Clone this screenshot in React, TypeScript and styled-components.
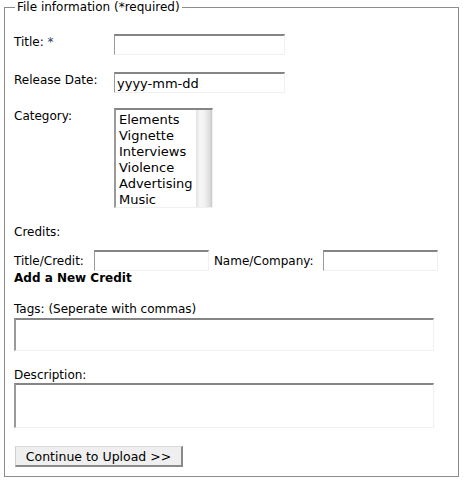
import React from "react";
import styled, { createGlobalStyle } from "styled-components";

const GlobalStyle = createGlobalStyle`
  body {
    margin: 0;
    background: #ffffff;
    font-family: "DejaVu Sans", Verdana, sans-serif;
    font-size: 12px;
    color: #000;
  }
`;

const categories = [
  "Elements",
  "Vignette",
  "Interviews",
  "Violence",
  "Advertising",
  "Music",
];

export default function App() {
  return (
    <>
      <GlobalStyle />
      <Fieldset>
        <Legend>File information (*required)</Legend>

        <FieldRow $gap={17}>
          <Label>
            Title: <Required>*</Required>
          </Label>
          <TextInput type="text" $width={171} />
        </FieldRow>

        <FieldRow $gap={15}>
          <Label>Release Date:</Label>
          <TextInput type="text" $width={171} defaultValue="yyyy-mm-dd" />
        </FieldRow>

        <FieldRow $gap={17}>
          <Label>Category:</Label>
          <ListBox role="listbox">
            <Options>
              {categories.map((c) => (
                <Option key={c}>{c}</Option>
              ))}
            </Options>
            <Track />
          </ListBox>
        </FieldRow>

        <Line $gap={11}>Credits:</Line>

        <CreditRow>
          <CreditLabel $space={10}>Title/Credit:</CreditLabel>
          <TextInput type="text" $width={115} />
          <CreditLabel $space={9} $lead={5}>
            Name/Company:
          </CreditLabel>
          <TextInput type="text" $width={115} />
        </CreditRow>

        <AddLink $gap={17}>Add a New Credit</AddLink>

        <Line $gap={2}>Tags: (Seperate with commas)</Line>
        <TextArea $height={33} $gap={17} />

        <Line $gap={1}>Description:</Line>
        <TextArea $height={45} $gap={18} />

        <SubmitButton type="button">Continue to Upload &gt;&gt;</SubmitButton>
      </Fieldset>
    </>
  );
}

const Fieldset = styled.fieldset`
  box-sizing: border-box;
  width: 455px;
  margin: 0 0 0 4px;
  padding: 20px 9px 9px 9px;
  border: 1px solid #8c8c8c;
  display: flex;
  flex-direction: column;
  align-items: flex-start;
  min-width: 0;
`;

const Legend = styled.legend`
  font-size: 12px;
  line-height: 14px;
  padding: 0 2px 0 2px;
  margin-left: 1px;
`;

const FieldRow = styled.div<{ $gap: number }>`
  display: flex;
  align-items: flex-start;
  margin-bottom: ${(p) => p.$gap}px;
`;

const Label = styled.div`
  width: 100px;
  line-height: 14px;
  padding-top: 1px;
`;

const Required = styled.span`
  color: #1f3a66;
`;

const TextInput = styled.input<{ $width: number }>`
  box-sizing: border-box;
  width: ${(p) => p.$width}px;
  height: 21px;
  margin: 0;
  padding: 0 2px;
  font-family: "DejaVu Sans", "Lucida Grande", sans-serif;
  font-size: 13px;
  color: #000;
  background: #fff;
  border-style: solid;
  border-width: 2px 1px 1px 1px;
  border-color: #858585 #f0f0f0 #f0f0f0 #9a9a9a;
  outline: none;
`;

const ListBox = styled.div`
  box-sizing: border-box;
  width: 99px;
  height: 100px;
  display: flex;
  border-style: solid;
  border-width: 2px 1px 1px 2px;
  border-color: #858585 #f0f0f0 #f0f0f0 #9a9a9a;
  overflow: hidden;
`;

const Options = styled.div`
  flex: 1;
  padding: 2px 0 0 3px;
`;

const Option = styled.div`
  font-family: "DejaVu Sans", "Lucida Grande", sans-serif;
  font-size: 13px;
  line-height: 16px;
  white-space: nowrap;
`;

const Track = styled.div`
  width: 16px;
  background: linear-gradient(
    to right,
    #e2e2e2 0%,
    #f7f7f7 25%,
    #f1f1f1 55%,
    #dcdcdc 85%,
    #cacaca 100%
  );
`;

const Line = styled.div<{ $gap: number }>`
  line-height: 14px;
  margin-bottom: ${(p) => p.$gap}px;
`;

const CreditRow = styled.div`
  display: flex;
  align-items: center;
`;

const CreditLabel = styled.span<{ $space: number; $lead?: number }>`
  margin-left: ${(p) => p.$lead ?? 0}px;
  margin-right: ${(p) => p.$space}px;
`;

const AddLink = styled.div<{ $gap: number }>`
  font-weight: bold;
  line-height: 14px;
  margin-bottom: ${(p) => p.$gap}px;
`;

const TextArea = styled.textarea<{ $height: number; $gap: number }>`
  box-sizing: border-box;
  width: 420px;
  height: ${(p) => p.$height}px;
  margin: 0 0 ${(p) => p.$gap}px 0;
  padding: 2px;
  resize: none;
  font-family: "DejaVu Sans", sans-serif;
  font-size: 12px;
  background: #fff;
  border-style: solid;
  border-width: 2px 1px 1px 2px;
  border-color: #858585 #f0f0f0 #f0f0f0 #9a9a9a;
  outline: none;
`;

const SubmitButton = styled.button`
  box-sizing: border-box;
  width: 168px;
  height: 21px;
  margin: 0 0 0 1px;
  padding: 0;
  font-family: "DejaVu Sans", "Lucida Grande", sans-serif;
  font-size: 12.5px;
  color: #000;
  background: #efefef;
  border-style: solid;
  border-width: 1px 2px 2px 1px;
  border-color: #dcdcdc #8a8a8a #8a8a8a #cfcfcf;
`;
